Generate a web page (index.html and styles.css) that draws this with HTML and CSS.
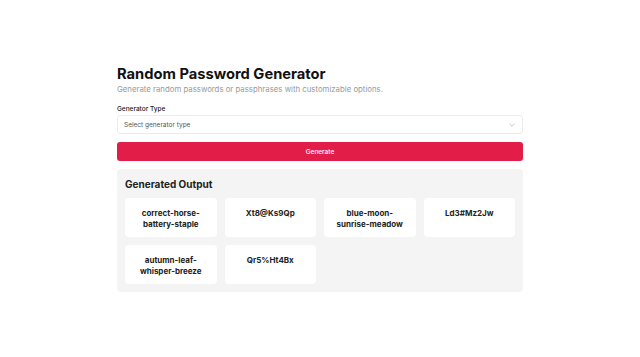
FILE: index.html
```html
<!DOCTYPE html>
<html>
<head>
<meta charset="utf-8">
<link rel="stylesheet" href="styles.css">
</head>
<body>
<main class="wrap">
  <h1 class="title">Random Password Generator</h1>
  <p class="subtitle">Generate random passwords or passphrases with customizable options.</p>
  <label class="label">Generator Type</label>
  <div class="select">
    <span>Select generator type</span>
    <svg class="chev" viewBox="0 0 10 6" width="6" height="4"><path d="M1 1l4 4 4-4" fill="none" stroke="#b5b5b5" stroke-width="1.3"/></svg>
  </div>
  <button class="btn">Generate</button>
  <section class="panel">
    <h2 class="ptitle">Generated Output</h2>
    <div class="grid">
      <div class="card">correct-horse-<br>battery-staple</div>
      <div class="card">Xt8@Ks9Qp</div>
      <div class="card">blue-moon-<br>sunrise-meadow</div>
      <div class="card">Ld3#Mz2Jw</div>
      <div class="card">autumn-leaf-<br>whisper-breeze</div>
      <div class="card">Qr5%Ht4Bx</div>
    </div>
  </section>
</main>
</body>
</html>
```

FILE: styles.css
```css
html, body { margin: 0; padding: 0; background: #fff; }
body { font-family: Inter, "Liberation Sans", sans-serif; color: #111; }
.wrap { width: 406px; margin: 0 auto; padding-top: 64px; }
.title { margin: 0; font-size: 14.7px; line-height: 20px; font-weight: 700; color: #111; letter-spacing: 0; }
.subtitle { margin: 0; font-size: 7.8px; line-height: 11px; color: #9a9a9a; }
.label { display: block; margin-top: 9px; font-size: 6.5px; line-height: 10px; font-weight: 500; color: #222; }
.select { margin-top: 1px; height: 19px; box-sizing: border-box; border: 1px solid #ececec; border-radius: 3px; display: flex; align-items: center; justify-content: space-between; padding: 0 7px 0 6px; font-size: 6.5px; color: #555; }
.btn { margin-top: 8px; width: 100%; height: 19px; border: 0; border-radius: 3px; background: #e11d48; color: #fff; font-family: inherit; font-size: 6.5px; font-weight: 500; display: block; padding: 0; }
.panel { margin-top: 8px; background: #f4f4f4; border-radius: 4px; padding: 9px 8px 8px 8px; }
.ptitle { margin: 0 0 7px 0; font-size: 10px; line-height: 13px; font-weight: 700; color: #222; }
.grid { display: grid; grid-template-columns: repeat(4, 1fr); gap: 8px; }
.card { background: #fff; border-radius: 4px; height: 39px; box-sizing: border-box; padding-top: 10px; text-align: center; font-size: 8px; line-height: 11px; font-weight: 700; color: #222; }
```
